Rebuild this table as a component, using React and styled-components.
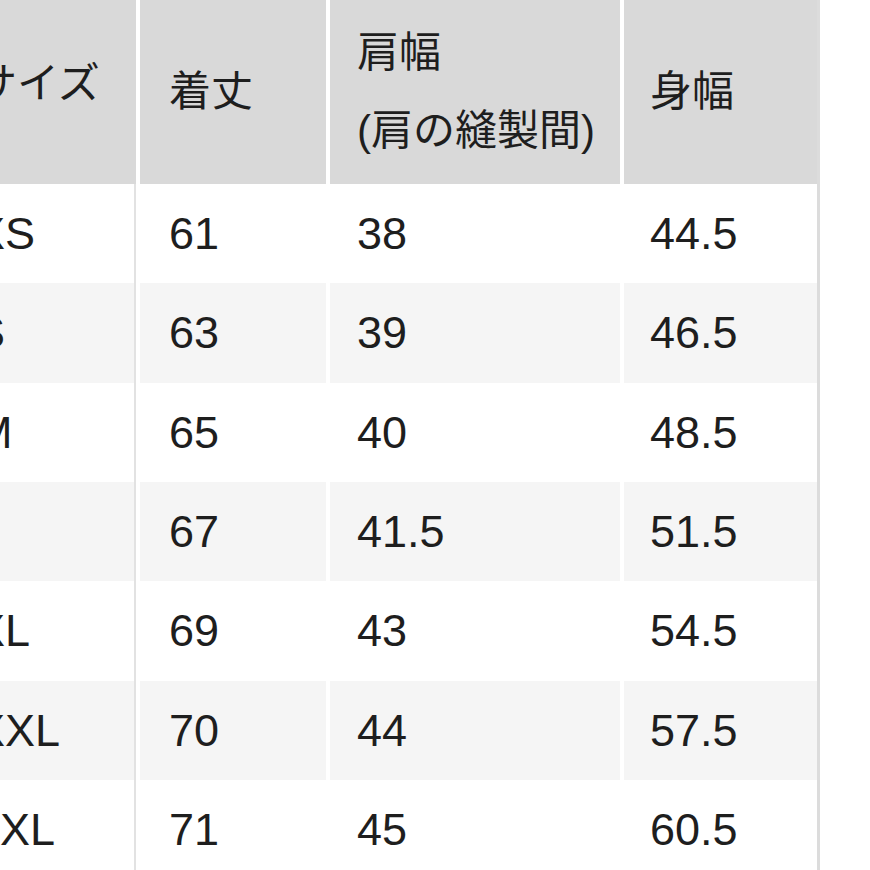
import React from "react";
import styled, { createGlobalStyle } from "styled-components";

const Global = createGlobalStyle`
  html, body { margin: 0; padding: 0; background: #ffffff; overflow: hidden; }
  body { width: 870px; height: 870px; }
`;

const Page = styled.div`
  width: 870px;
  height: 870px;
  overflow: hidden;
  background: #ffffff;
  font-family: "Liberation Sans", "Noto Sans CJK JP", sans-serif;
  color: #1e1e1e;
`;

const Table = styled.div`
  margin-left: -54px;
  width: 874px;
  display: flex;
  flex-direction: column;
`;

const Row = styled.div`
  display: grid;
  grid-template-columns: 190px 186px 290px 196px;
  column-gap: 4px;
  height: ${(p) => (p.$head ? "184px" : "99.33px")};
`;

const Cell = styled.div`
  display: flex;
  flex-direction: column;
  justify-content: center;
  padding-left: ${(p) => p.$pad || 28}px;
  padding-bottom: ${(p) => p.$lift || 0}px;
  box-sizing: border-box;
  background: ${(p) => (p.$head ? "#d9d9d9" : p.$alt ? "#f5f5f5" : "#ffffff")};
  border-right: ${(p) =>
    p.$edge ? "3px solid #dcdcdc" : p.$first && !p.$head ? "2px solid #e2e2e2" : "none"};
  font-size: ${(p) => (p.$head ? "42px" : "45px")};
  line-height: ${(p) => (p.$head ? "78px" : "1")};
  white-space: nowrap;
`;

const HeadLine = styled.span`
  display: block;
`;

const rows = [
  ["XS", "61", "38", "44.5"],
  ["S", "63", "39", "46.5"],
  ["M", "65", "40", "48.5"],
  ["L", "67", "41.5", "51.5"],
  ["XL", "69", "43", "54.5"],
  ["XXL", "70", "44", "57.5"],
  ["3XL", "71", "45", "60.5"],
];

const pads = [29, 29, 27, 26];

export default function App() {
  return (
    <Page>
      <Global />
      <Table>
        <Row $head>
          <Cell $head $first $pad={29} $lift={16}>サイズ</Cell>
          <Cell $head $pad={29}>着丈</Cell>
          <Cell $head $pad={27}>
            <HeadLine>肩幅</HeadLine>
            <HeadLine>(肩の縫製間)</HeadLine>
          </Cell>
          <Cell $head $edge $pad={26}>身幅</Cell>
        </Row>
        {rows.map((r, i) => (
          <Row key={r[0]}>
            {r.map((v, j) => (
              <Cell
                key={j}
                $alt={i % 2 === 1}
                $first={j === 0}
                $edge={j === 3}
                $pad={pads[j]}
              >
                {v}
              </Cell>
            ))}
          </Row>
        ))}
      </Table>
    </Page>
  );
}
